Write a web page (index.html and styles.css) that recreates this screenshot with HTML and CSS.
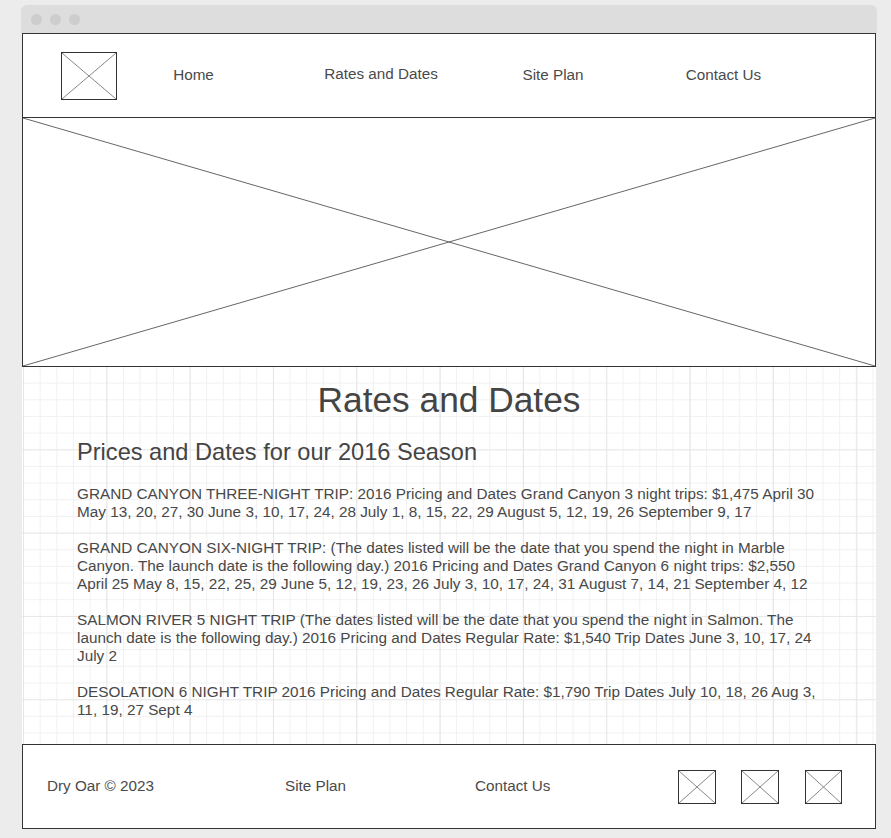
FILE: index.html
```html
<!DOCTYPE html>
<html lang="en">
<head>
<meta charset="utf-8">
<title>Rates and Dates</title>
<link rel="stylesheet" href="styles.css">
</head>
<body>
<div class="window">
  <div class="titlebar">
    <span class="dot"></span><span class="dot"></span><span class="dot"></span>
  </div>
  <header class="site-header">
    <div class="logo ph">
      <svg viewBox="0 0 100 100" preserveAspectRatio="none"><line x1="0" y1="0" x2="100" y2="100"/><line x1="100" y1="0" x2="0" y2="100"/></svg>
    </div>
    <a class="nav-link" href="#">Home</a>
    <a class="nav-link nav-up" href="#">Rates and Dates</a>
    <a class="nav-link" href="#">Site Plan</a>
    <a class="nav-link" href="#">Contact Us</a>
  </header>
  <div class="hero">
    <svg viewBox="0 0 100 100" preserveAspectRatio="none"><line x1="0" y1="0" x2="100" y2="100"/><line x1="100" y1="0" x2="0" y2="100"/></svg>
  </div>
  <main class="content">
    <h1 class="page-title">Rates and Dates</h1>
    <h2 class="section-title">Prices and Dates for our 2016 Season</h2>
    <p>GRAND CANYON THREE-NIGHT TRIP: 2016 Pricing and Dates Grand Canyon 3 night trips: $1,475 April 30 May 13, 20, 27, 30 June 3, 10, 17, 24, 28 July 1, 8, 15, 22, 29 August 5, 12, 19, 26 September 9, 17</p>
    <p>GRAND CANYON SIX-NIGHT TRIP: (The dates listed will be the date that you spend the night in Marble Canyon. The launch date is the following day.) 2016 Pricing and Dates Grand Canyon 6 night trips: $2,550 April 25 May 8, 15, 22, 25, 29 June 5, 12, 19, 23, 26 July 3, 10, 17, 24, 31 August 7, 14, 21 September 4, 12</p>
    <p>SALMON RIVER 5 NIGHT TRIP (The dates listed will be the date that you spend the night in Salmon. The launch date is the following day.) 2016 Pricing and Dates Regular Rate: $1,540 Trip Dates June 3, 10, 17, 24 July 2</p>
    <p>DESOLATION 6 NIGHT TRIP 2016 Pricing and Dates Regular Rate: $1,790 Trip Dates July 10, 18, 26 Aug 3, 11, 19, 27 Sept 4</p>
  </main>
  <footer class="site-footer">
    <span class="foot-text">Dry Oar © 2023</span>
    <a class="foot-text" href="#">Site Plan</a>
    <a class="foot-text" href="#">Contact Us</a>
    <div class="socials">
      <div class="social ph"><svg viewBox="0 0 100 100" preserveAspectRatio="none"><line x1="0" y1="0" x2="100" y2="100"/><line x1="100" y1="0" x2="0" y2="100"/></svg></div>
      <div class="social ph"><svg viewBox="0 0 100 100" preserveAspectRatio="none"><line x1="0" y1="0" x2="100" y2="100"/><line x1="100" y1="0" x2="0" y2="100"/></svg></div>
      <div class="social ph"><svg viewBox="0 0 100 100" preserveAspectRatio="none"><line x1="0" y1="0" x2="100" y2="100"/><line x1="100" y1="0" x2="0" y2="100"/></svg></div>
    </div>
  </footer>
</div>
</body>
</html>
```
FILE: styles.css
```css
* { box-sizing: border-box; }

html, body {
  margin: 0;
  padding: 0;
  background: #ececec;
}

body {
  font-family: "Liberation Sans", Arial, sans-serif;
  color: #444;
}

a { color: inherit; text-decoration: none; }

.window {
  width: 856px;
  margin: 5px 0 0 21px;
}

.titlebar {
  height: 28px;
  background: #dddddd;
  border-radius: 6px 6px 0 0;
  display: flex;
  align-items: center;
  gap: 8px;
  padding: 0 0 0 10px;
}

.dot {
  width: 11px;
  height: 11px;
  border-radius: 50%;
  background: #cdcdcd;
}

svg {
  display: block;
  width: 100%;
  height: 100%;
}

svg line {
  stroke: #666;
  stroke-width: 1;
  vector-effect: non-scaling-stroke;
}

.ph {
  border: 1px solid #333;
  background: #fff;
}

.ph svg line { stroke: #888; }

.site-header {
  margin: 0 1px;
  height: 85px;
  border: 1px solid #333;
  background: #fff;
  display: grid;
  grid-template-columns: 94px 153px 222px 122px 219px 1fr;
  align-items: center;
  font-size: 15.25px;
  color: #4a4a4a;
}

.logo {
  justify-self: end;
  width: 56px;
  height: 48px;
}

.nav-link {
  text-align: center;
  line-height: 18px;
  margin-top: -2px;
}

.nav-up { margin-top: -4px; }

.hero {
  margin: 0 1px;
  height: 249px;
  border: 1px solid #333;
  border-top: 0;
  background: #fff;
}

.content {
  margin: 0 1px;
  height: 377px;
  padding: 13px 55px 0;
  background-color: #fff;
  background-image:
    linear-gradient(to right, #e6e6e6 1px, transparent 1px),
    linear-gradient(to bottom, #e9e9e9 1px, transparent 1px),
    linear-gradient(to right, #f1f1f1 1px, transparent 1px),
    linear-gradient(to bottom, #f1f1f1 1px, transparent 1px);
  background-size: 83.333px 83.333px, 83.333px 83.333px, 16.667px 16.667px, 16.667px 16.667px;
  background-position: 1px -1px, 1px -1px, 1px -1px, 1px -1px;
}

.page-title {
  margin: 0;
  font-size: 35.3px;
  font-weight: normal;
  line-height: 40px;
  text-align: center;
  color: #444;
}

.section-title {
  margin: 18px 0 0;
  font-size: 23.6px;
  font-weight: normal;
  line-height: 28px;
  color: #444;
}

.content p {
  margin: 19px 0 0;
  font-size: 15.3px;
  line-height: 18px;
  color: #484848;
}

.content p + p { margin-top: 18px; }

.site-footer {
  margin: 0 1px;
  height: 85px;
  border: 1px solid #333;
  background: #fff;
  display: grid;
  grid-template-columns: 238px 190px 203px auto;
  align-items: center;
  padding-left: 24px;
  font-size: 15.25px;
  color: #4a4a4a;
}

.foot-text { margin-top: -2px; }

.socials {
  display: flex;
  gap: 25px;
}

.social {
  width: 38px;
  height: 34px;
}

.social + .social { margin-left: 0; }
.social:last-child { margin-left: 1px; width: 37px; }
```
